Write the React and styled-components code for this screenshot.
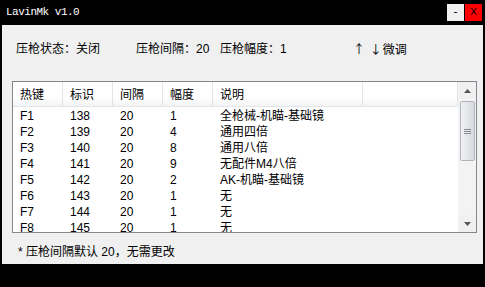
import React from 'react';
import styled, { createGlobalStyle } from 'styled-components';

const GlobalStyle = createGlobalStyle`
  html, body {
    margin: 0;
    padding: 0;
    background: #000;
  }
  body {
    font-family: "Liberation Sans", "Noto Sans CJK SC", sans-serif;
    font-size: 12px;
    color: #000;
  }
`;

const Window = styled.div`
  width: 485px;
  height: 287px;
  background: #000;
  display: flex;
  flex-direction: column;
`;

const TitleBar = styled.div`
  height: 25px;
  display: flex;
  align-items: flex-start;
  justify-content: space-between;
  padding: 0 3px 0 6px;
  box-sizing: border-box;
`;

const Title = styled.span`
  color: #fff;
  font-family: "Liberation Mono", monospace;
  font-size: 11px;
  letter-spacing: -0.5px;
  line-height: 25px;
`;

const Controls = styled.div`
  display: flex;
  gap: 1px;
  margin-top: 4px;
`;

const ControlButton = styled.button`
  width: 17px;
  height: 17px;
  padding: 0;
  border: none;
  background: ${p => (p.$close ? '#ff0000' : '#f0f0f0')};
  color: #000;
  font-family: "Liberation Mono", monospace;
  font-size: 11px;
  line-height: 17px;
  text-align: center;
`;

const Panel = styled.div`
  margin: 0 2px;
  height: 239px;
  background: #f0f0f0;
  padding: 16px 7px 0 10px;
  box-sizing: border-box;
  display: flex;
  flex-direction: column;
`;

const StatusRow = styled.div`
  display: grid;
  grid-template-columns: 120px 84px 133px auto;
  padding-left: 4px;
  height: 16px;
  line-height: 16px;
  white-space: nowrap;
`;

const Arrows = styled.span`
  font-family: "Noto Sans CJK SC", sans-serif;
  letter-spacing: 1px;
`;

const TableBox = styled.div`
  margin-top: 24px;
  width: 465px;
  height: 152px;
  border: 1px solid #828790;
  box-sizing: border-box;
  background: #fff;
  display: flex;
  overflow: hidden;
`;

const ListArea = styled.div`
  flex: 1;
  overflow: hidden;
`;

const HeaderRow = styled.div`
  display: flex;
  height: 24px;
  border-bottom: 1px solid #e5e5e5;
  background: linear-gradient(#ffffff 0%, #ffffff 60%, #f3f4f6 100%);
`;

const HeaderCell = styled.div`
  width: ${p => p.$w}px;
  box-sizing: border-box;
  padding-left: 7px;
  line-height: 26px;
  font-size: 12px;
  border-right: 1px solid #e3e4e6;
  flex-shrink: 0;
`;

const Rows = styled.div`
  padding-top: 1px;
`;

const Row = styled.div`
  display: flex;
  height: 16px;
  line-height: 16px;
`;

const Cell = styled.div`
  width: ${p => p.$w}px;
  box-sizing: border-box;
  padding-left: 7px;
  flex-shrink: 0;
  white-space: nowrap;
`;

const ScrollBar = styled.div`
  width: 17px;
  background: #f0f0f0;
  display: flex;
  flex-direction: column;
  border-left: 1px solid #f4f4f4;
`;

const ArrowBox = styled.div`
  height: 17px;
  display: flex;
  align-items: center;
  justify-content: center;
  background: #f0f0f0;
`;

const Track = styled.div`
  flex: 1;
  background: #f3f3f3;
  padding-top: 2px;
`;

const Thumb = styled.div`
  margin: 0 1px;
  height: 60px;
  border: 1px solid #b0b4bb;
  border-radius: 2px;
  box-sizing: border-box;
  background: linear-gradient(90deg, #f2f3f5 0%, #e4e6ea 45%, #d6d9de 100%);
  display: flex;
  align-items: center;
  justify-content: center;
`;

const Footer = styled.div`
  margin-top: 11px;
  padding-left: 6px;
  line-height: 16px;
`;

const cols = [50, 50, 50, 50, 150, 95];

const data = [
  ['F1', '138', '20', '1', '全枪械-机瞄-基础镜'],
  ['F2', '139', '20', '4', '通用四倍'],
  ['F3', '140', '20', '8', '通用八倍'],
  ['F4', '141', '20', '9', '无配件M4八倍'],
  ['F5', '142', '20', '2', 'AK-机瞄-基础镜'],
  ['F6', '143', '20', '1', '无'],
  ['F7', '144', '20', '1', '无'],
  ['F8', '145', '20', '1', '无'],
];

const headers = ['热键', '标识', '间隔', '幅度', '说明', ''];

const App = () => (
  <Window>
    <GlobalStyle />
    <TitleBar>
      <Title>LavinMk v1.0</Title>
      <Controls>
        <ControlButton>-</ControlButton>
        <ControlButton $close>X</ControlButton>
      </Controls>
    </TitleBar>
    <Panel>
      <StatusRow>
        <span>压枪状态：关闭</span>
        <span>压枪间隔：20</span>
        <span>压枪幅度：1</span>
        <span><Arrows>↑ ↓</Arrows>微调</span>
      </StatusRow>
      <TableBox>
        <ListArea>
          <HeaderRow>
            {headers.map((h, i) => (
              <HeaderCell key={i} $w={cols[i]}>{h}</HeaderCell>
            ))}
          </HeaderRow>
          <Rows>
            {data.map(r => (
              <Row key={r[0]}>
                {r.map((c, i) => (
                  <Cell key={i} $w={cols[i]}>{c}</Cell>
                ))}
              </Row>
            ))}
          </Rows>
        </ListArea>
        <ScrollBar>
          <ArrowBox>
            <svg width="7" height="4" viewBox="0 0 7 4"><path d="M3.5 0 L7 4 L0 4 Z" fill="#555" /></svg>
          </ArrowBox>
          <Track>
            <Thumb>
              <svg width="7" height="7" viewBox="0 0 7 7">
                <path d="M0 1.5h7M0 3.5h7M0 5.5h7" stroke="#8a8e94" strokeWidth="1" />
              </svg>
            </Thumb>
          </Track>
          <ArrowBox>
            <svg width="7" height="4" viewBox="0 0 7 4"><path d="M0 0 L7 0 L3.5 4 Z" fill="#555" /></svg>
          </ArrowBox>
        </ScrollBar>
      </TableBox>
      <Footer>* 压枪间隔默认 20，无需更改</Footer>
    </Panel>
  </Window>
);

export default App;
